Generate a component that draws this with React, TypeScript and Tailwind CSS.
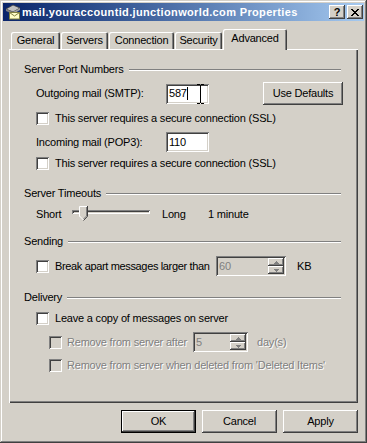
import React from 'react';

const raised = 'shadow-[inset_-1px_-1px_#404040,inset_1px_1px_#ffffff,inset_-2px_-2px_#808080]';
const sunken = 'shadow-[inset_1px_1px_#808080,inset_-1px_-1px_#ffffff,inset_2px_2px_#404040,inset_-2px_-2px_#d4d0c8]';
const tabEdge = 'shadow-[inset_1px_1px_#ffffff,inset_-1px_0_#404040,inset_-2px_0_#808080]';
const greyText = 'text-[#808080] [text-shadow:1px_1px_0_#ffffff]';

function MailIcon() {
  return (
    <svg width="16" height="16" viewBox="0 0 16 16" className="shrink-0">
      <path d="M1 5 L8 1 L15 4 L8 8 Z" fill="#c0c0c0" stroke="#404040" strokeWidth="0.8" />
      <path d="M1 5 L8 8 L8 10 L1 7 Z" fill="#808080" />
      <path d="M8 8 L15 4 L15 6 L8 10 Z" fill="#a0a0a0" />
      <rect x="4.5" y="8.5" width="10" height="6.5" fill="#ffffc8" stroke="#808040" />
      <path d="M4.5 8.5 L9.5 12 L14.5 8.5" fill="none" stroke="#808040" />
    </svg>
  );
}

function CheckBox({ disabled = false }: { disabled?: boolean }) {
  return (
    <span
      className={`block w-[13px] h-[13px] shrink-0 ${disabled ? 'bg-[#d4d0c8]' : 'bg-white'} ${sunken}`}
    />
  );
}

function GroupTitle({ title, className }: { title: string; className: string }) {
  return (
    <div className={`flex items-center h-[13px] ${className}`}>
      <span className="whitespace-nowrap">{title}</span>
      <div className="ml-[5px] flex-1 h-[2px] border-t border-t-[#808080] border-b border-b-white" />
    </div>
  );
}

function Arrow({ down = false }: { down?: boolean }) {
  return (
    <svg width="5" height="3" viewBox="0 0 5 3" className={down ? 'rotate-180' : ''}>
      <path d="M2 0H3V1H4V2H5V3H0V2H1V1H2Z" fill="#808080" />
    </svg>
  );
}

function SpinBox({ value, width }: { value: string; width: string }) {
  return (
    <div className={`flex h-[20px] shrink-0 p-[2px] bg-[#d4d0c8] ${sunken} ${width}`}>
      <span className="flex-1 pl-[1px] leading-[16px] text-[#808080]">{value}</span>
      <div className="flex flex-col w-[16px]">
        <div className={`h-[8px] flex items-center justify-center ${raised}`}>
          <Arrow />
        </div>
        <div className={`h-[8px] flex items-center justify-center ${raised}`}>
          <Arrow down />
        </div>
      </div>
    </div>
  );
}

function TitleButton({ children }: { children: React.ReactNode }) {
  return (
    <div className={`w-[16px] h-[14px] flex items-center justify-center bg-[#d4d0c8] ${raised}`}>
      {children}
    </div>
  );
}

function Thumb() {
  return (
    <svg width="9" height="15" viewBox="0 0 9 15" className="absolute left-[7px] top-[-4px]">
      <path d="M0 0H9V10L4.5 14.5L0 10Z" fill="#d4d0c8" />
      <path d="M0.5 10.5V0.5H8" fill="none" stroke="#ffffff" />
      <path d="M0.5 10L4.5 14" fill="none" stroke="#ffffff" />
      <path d="M8.5 0V10.3L4.5 14.5" fill="none" stroke="#404040" />
      <path d="M7.5 1V10L4.5 13" fill="none" stroke="#808080" />
    </svg>
  );
}

const tabs = [
  { label: 'General', cls: 'ml-[2px] w-[49px]' },
  { label: 'Servers', cls: 'ml-[1px] w-[47px]' },
  { label: 'Connection', cls: 'ml-[1px] w-[65px]' },
  { label: 'Security', cls: 'ml-[1px] w-[47px]' },
];

function App(): React.JSX.Element {
  return (
    <div
      className={`w-[367px] h-[443px] p-[3px] flex flex-col bg-[#d4d0c8] text-black text-[11px] leading-[13px] tracking-[-0.2px] font-['Liberation_Sans',Arial,sans-serif] shadow-[inset_-1px_-1px_#404040,inset_1px_1px_#d4d0c8,inset_-2px_-2px_#808080,inset_2px_2px_#ffffff]`}
    >
      {/* title bar */}
      <div className="h-[18px] shrink-0 flex items-center pl-[2px] pr-[1px] bg-linear-to-r from-[#0a246a] to-[#a6caf0]">
        <MailIcon />
        <span className="ml-[1px] text-white font-bold tracking-[0.35px] whitespace-nowrap">
          mail.youraccountid.junctionworld.com Properties
        </span>
        <div className="ml-auto flex gap-[2px]">
          <TitleButton>
            <span className="font-bold text-[11px] leading-[11px] tracking-normal">?</span>
          </TitleButton>
          <TitleButton>
            <svg width="8" height="7" viewBox="0 0 8 7">
              <path
                d="M0 0h2v1H0zM6 0h2v1H6zM1 1h2v1H1zM5 1h2v1H5zM2 2h4v1H2zM3 3h2v1H3zM2 4h4v1H2zM1 5h2v1H1zM5 5h2v1H5zM0 6h2v1H0zM6 6h2v1H6z"
                fill="#000"
              />
            </svg>
          </TitleButton>
        </div>
      </div>

      <div className="mt-[8px] ml-[6px] w-[349px] flex flex-col">
        {/* tabs */}
        <div className="h-[20px] flex items-end">
          {tabs.map((t) => (
            <div
              key={t.label}
              className={`h-[17px] flex items-center justify-center rounded-t-[2px] ${tabEdge} ${t.cls}`}
            >
              {t.label}
            </div>
          ))}
          <div
            className={`relative z-10 ml-[1px] w-[64px] h-[21px] -mb-[1px] pb-[3px] flex items-center justify-center rounded-t-[2px] bg-[#d4d0c8] ${tabEdge}`}
          >
            Advanced
          </div>
        </div>

        {/* panel */}
        <div className="h-[354px] flex flex-col pt-[14px] pl-[15px] pr-[17px] shadow-[inset_1px_1px_#ffffff,inset_-1px_-1px_#404040,inset_-2px_-2px_#808080]">
          <GroupTitle title="Server Port Numbers" className="" />

          <div className="mt-[6px] ml-[12px] h-[23px] flex items-center">
            <span className="w-[130px] shrink-0">Outgoing mail (SMTP):</span>
            <div className={`relative w-[43px] h-[20px] shrink-0 bg-white flex items-center pl-[3px] ${sunken}`}>
              <span>587</span>
              <span className="w-[1px] h-[13px] bg-black" />
              <svg width="7" height="20" viewBox="0 0 7 20" className="absolute left-[31px] top-[0px]">
                <path d="M0 0h3v1H0zM4 0h3v1H4zM3 1h1v18H3zM0 19h3v1H0zM4 19h3v1H4z" fill="#000" />
              </svg>
            </div>
            <div className={`ml-[54px] w-[80px] h-[23px] shrink-0 flex items-center justify-center ${raised}`}>
              Use Defaults
            </div>
          </div>

          <div className="mt-[7px] ml-[12px] h-[13px] flex items-center gap-[6px]">
            <CheckBox />
            <span className="whitespace-nowrap">This server requires a secure connection (SSL)</span>
          </div>

          <div className="mt-[7px] ml-[12px] h-[20px] flex items-center">
            <span className="w-[130px] shrink-0">Incoming mail (POP3):</span>
            <div className={`w-[43px] h-[20px] shrink-0 bg-white flex items-center pl-[3px] ${sunken}`}>
              110
            </div>
          </div>

          <div className="mt-[5px] ml-[12px] h-[13px] flex items-center gap-[6px]">
            <CheckBox />
            <span className="whitespace-nowrap">This server requires a secure connection (SSL)</span>
          </div>

          <GroupTitle title="Server Timeouts" className="mt-[17px]" />

          <div className="mt-[5px] ml-[12px] h-[18px] flex items-center">
            <span className="w-[36px] shrink-0">Short</span>
            <div className={`relative self-start mt-[5px] w-[78px] h-[4px] shrink-0 ${sunken}`}>
              <Thumb />
            </div>
            <span className="ml-[12px] w-[46px] shrink-0">Long</span>
            <span className="whitespace-nowrap">1 minute</span>
          </div>

          <GroupTitle title="Sending" className="mt-[12px]" />

          <div className="mt-[8px] ml-[12px] h-[20px] flex items-center">
            <CheckBox />
            <span className="ml-[6px] w-[161px] shrink-0 whitespace-nowrap tracking-[-0.35px]">
              Break apart messages larger than
            </span>
            <SpinBox value="60" width="w-[70px]" />
            <span className="ml-[11px]">KB</span>
          </div>

          <GroupTitle title="Delivery" className="mt-[15px]" />

          <div className="mt-[8px] ml-[12px] h-[13px] flex items-center gap-[6px]">
            <CheckBox />
            <span className="whitespace-nowrap">Leave a copy of messages on server</span>
          </div>

          <div className="mt-[7px] ml-[25px] h-[20px] flex items-center">
            <CheckBox disabled />
            <span className={`ml-[5px] w-[126px] shrink-0 whitespace-nowrap ${greyText}`}>
              Remove from server after
            </span>
            <SpinBox value="5" width="w-[55px]" />
            <span className={`ml-[9px] ${greyText}`}>day(s)</span>
          </div>

          <div className="mt-[7px] ml-[25px] h-[13px] flex items-center">
            <CheckBox disabled />
            <span className={`ml-[5px] whitespace-nowrap ${greyText}`}>
              Remove from server when deleted from 'Deleted Items'
            </span>
          </div>
        </div>
      </div>

      {/* dialog buttons */}
      <div className="mt-[7px] pr-[6px] flex justify-end gap-[6px]">
        <div className={`w-[75px] h-[23px] flex items-center justify-center border border-black ${raised}`}>
          OK
        </div>
        <div className={`w-[75px] h-[23px] flex items-center justify-center ${raised}`}>Cancel</div>
        <div className={`w-[75px] h-[23px] flex items-center justify-center ${raised}`}>Apply</div>
      </div>
    </div>
  );
}

export default App;
